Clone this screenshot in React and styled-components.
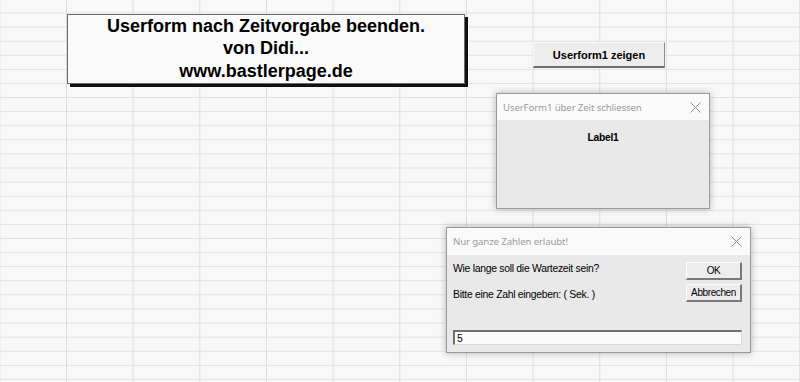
import React from 'react';
import styled, { createGlobalStyle } from 'styled-components';

const GlobalStyle = createGlobalStyle`
  html, body {
    margin: 0;
    padding: 0;
    background: #f8f8f8;
  }
`;

const Sheet = styled.div`
  position: relative;
  width: 800px;
  height: 382px;
  overflow: hidden;
  background-color: #f8f8f8;
  background-image:
    linear-gradient(to right, #dcdcdc 1px, transparent 1px),
    linear-gradient(to bottom, #e0e0e0 1px, transparent 1px);
  background-size: 66.667px 100%, 100% 14.1px;
  background-position: 66px 0, 0 12.5px;
  font-family: 'Liberation Sans', Arial, sans-serif;
`;

// floating shapes sit on the sheet at their own place, like objects on a canvas
const Floating = styled.div`
  position: absolute;
  left: ${(p) => p.x}px;
  top: ${(p) => p.y}px;
  width: ${(p) => p.w}px;
  height: ${(p) => p.h}px;
  box-sizing: border-box;
`;

const TitleBox = styled(Floating)`
  display: flex;
  flex-direction: column;
  align-items: center;
  justify-content: center;
  background: #fafafa;
  border: 1px solid #6a6a6a;
  box-shadow: 3px 3px 0 #111;
  font-weight: bold;
  font-size: 18px;
  line-height: 22.5px;
  color: #000;
  padding-bottom: 1px;
`;

const SheetButton = styled(Floating)`
  display: flex;
  align-items: center;
  justify-content: center;
  background: #ededed;
  border-top: 1px solid #f8f8f8;
  border-left: 1px solid #f8f8f8;
  border-right: 1px solid #8c8c8c;
  border-bottom: 2px solid #6e6e6e;
  font-weight: bold;
  font-size: 11px;
  color: #000;
`;

const Dialog = styled(Floating)`
  display: flex;
  flex-direction: column;
  background: #ececec;
  border: 1px solid #9a9a9a;
  box-shadow: 0 0 7px rgba(0, 0, 0, 0.28);
`;

const TitleBar = styled.div`
  display: flex;
  align-items: center;
  justify-content: space-between;
  height: ${(p) => p.h}px;
  flex: none;
  padding: 0 8px 0 6px;
  background: #fafafa;
  font-family: 'Noto Sans', 'Open Sans', sans-serif;
  font-size: 9.7px;
  letter-spacing: -0.15px;
  color: #9b9b9b;
`;

const CloseIcon = styled.svg`
  width: 11px;
  height: 11px;
  stroke: #8a8a8a;
  stroke-width: 1;
`;

const Body = styled.div`
  flex: 1;
  background-color: #ededed;
  background-image:
    radial-gradient(circle at 1px 1px, #e4e4e4 0.6px, transparent 0.8px);
  background-size: 2px 2px;
`;

const LabelBody = styled(Body)`
  display: flex;
  justify-content: center;
  padding-top: 12px;
`;

const BoldLabel = styled.div`
  font-weight: bold;
  font-size: 10.3px;
  letter-spacing: -0.3px;
  color: #000;
  height: 14px;
`;

const PromptBody = styled(Body)`
  display: grid;
  grid-template-columns: 1fr 56px;
  grid-template-rows: auto 1fr auto;
  column-gap: 8px;
  padding: 7px 8px 7px 6px;
`;

const PromptText = styled.div`
  display: flex;
  flex-direction: column;
  gap: 12px;
  font-size: 10.4px;
  letter-spacing: -0.28px;
  color: #000;
  line-height: 14px;
`;

const ButtonStack = styled.div`
  display: flex;
  flex-direction: column;
  gap: 4px;
`;

const DialogButton = styled.div`
  height: 18px;
  box-sizing: border-box;
  display: flex;
  align-items: center;
  justify-content: center;
  background: #ededed;
  border-top: 1px solid #fdfdfd;
  border-left: 1px solid #fdfdfd;
  border-right: 2px solid #7a7a7a;
  border-bottom: 2px solid #7a7a7a;
  font-size: 10px;
  letter-spacing: -0.4px;
  color: #000;
`;

const TextField = styled.div`
  grid-column: 1 / -1;
  grid-row: 3;
  height: 15px;
  box-sizing: border-box;
  display: flex;
  align-items: center;
  padding-left: 2px;
  background: #fbfbfb;
  border-top: 2px solid #707070;
  border-left: 2px solid #707070;
  border-right: 1px solid #d8d8d8;
  border-bottom: 1px solid #d8d8d8;
  font-size: 10.4px;
  color: #000;
`;

const Close = () => (
  <CloseIcon viewBox="0 0 11 11">
    <path d="M0.5 0.5 L10.5 10.5 M10.5 0.5 L0.5 10.5" fill="none" />
  </CloseIcon>
);

export default function App() {
  return (
    <>
      <GlobalStyle />
      <Sheet>
        <TitleBox x={67} y={14} w={398} h={70}>
          <div>Userform nach Zeitvorgabe beenden.</div>
          <div>von Didi...</div>
          <div>www.bastlerpage.de</div>
        </TitleBox>

        <SheetButton x={533} y={42} w={132} h={26}>
          Userform1 zeigen
        </SheetButton>

        <Dialog x={496} y={93} w={214} h={116}>
          <TitleBar h={26}>
            <span>UserForm1 über Zeit schliessen</span>
            <Close />
          </TitleBar>
          <LabelBody>
            <BoldLabel>Label1</BoldLabel>
          </LabelBody>
        </Dialog>

        <Dialog x={446} y={227} w={305} h={126}>
          <TitleBar h={27}>
            <span>Nur ganze Zahlen erlaubt!</span>
            <Close />
          </TitleBar>
          <PromptBody>
            <PromptText>
              <div>Wie lange soll die Wartezeit sein?</div>
              <div>Bitte eine Zahl eingeben: ( Sek. )</div>
            </PromptText>
            <ButtonStack>
              <DialogButton>OK</DialogButton>
              <DialogButton>Abbrechen</DialogButton>
            </ButtonStack>
            <TextField>5</TextField>
          </PromptBody>
        </Dialog>
      </Sheet>
    </>
  );
}
